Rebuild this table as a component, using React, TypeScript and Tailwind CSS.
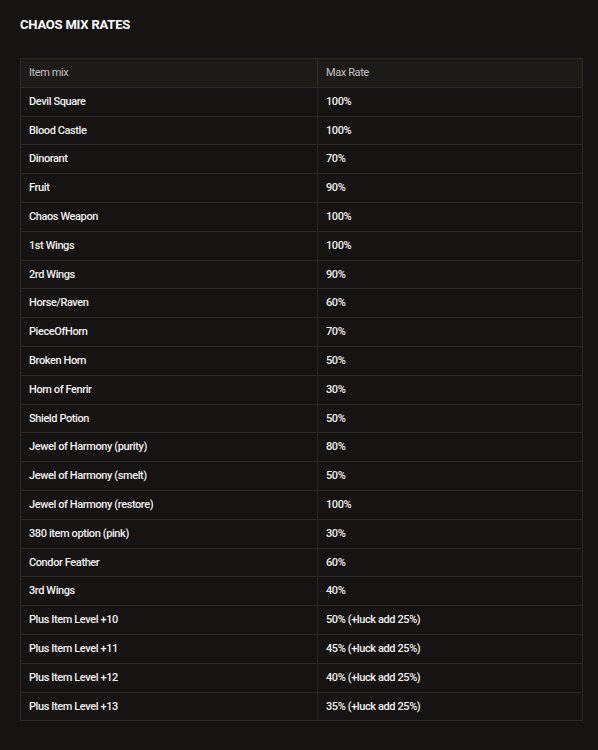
const rates = [
  { item: "Devil Square", rate: "100%" },
  { item: "Blood Castle", rate: "100%" },
  { item: "Dinorant", rate: "70%" },
  { item: "Fruit", rate: "90%" },
  { item: "Chaos Weapon", rate: "100%" },
  { item: "1st Wings", rate: "100%" },
  { item: "2rd Wings", rate: "90%" },
  { item: "Horse/Raven", rate: "60%" },
  { item: "PieceOfHorn", rate: "70%" },
  { item: "Broken Horn", rate: "50%" },
  { item: "Horn of Fenrir", rate: "30%" },
  { item: "Shield Potion", rate: "50%" },
  { item: "Jewel of Harmony (purity)", rate: "80%" },
  { item: "Jewel of Harmony (smelt)", rate: "50%" },
  { item: "Jewel of Harmony (restore)", rate: "100%" },
  { item: "380 item option (pink)", rate: "30%" },
  { item: "Condor Feather", rate: "60%" },
  { item: "3rd Wings", rate: "40%" },
  { item: "Plus Item Level +10", rate: "50% (+luck add 25%)" },
  { item: "Plus Item Level +11", rate: "45% (+luck add 25%)" },
  { item: "Plus Item Level +12", rate: "40% (+luck add 25%)" },
  { item: "Plus Item Level +13", rate: "35% (+luck add 25%)" },
]

export default function App() {
  return (
    <div className="min-h-[750px] w-full bg-[#161412] px-5 pt-[17px] font-['Roboto','Liberation_Sans',sans-serif]">
      {/* Title */}
      <h2 className="text-[13px] font-bold leading-[16px] tracking-[-0.2px] text-white">CHAOS MIX RATES</h2>

      {/* Rates table */}
      <table className="mt-[25px] w-[563px] table-fixed border-collapse text-[11px] tracking-[-0.4px]">
        <colgroup>
          <col className="w-[297px]" />
          <col />
        </colgroup>
        <thead>
          <tr className="bg-[#1d1b18]">
            <th className="border border-[#2c2a27] px-2 py-[6px] text-left font-normal leading-[15.8px] text-[#c4c4c4]">
              Item mix
            </th>
            <th className="border border-[#2c2a27] px-2 py-[6px] text-left font-normal leading-[15.8px] text-[#c4c4c4]">
              Max Rate
            </th>
          </tr>
        </thead>
        <tbody>
          {rates.map((row) => (
            <tr key={row.item}>
              <td className="border border-[#2c2a27] px-2 py-[6px] font-medium leading-[15.8px] text-[#f0f0f0]">
                {row.item}
              </td>
              <td className="border border-[#2c2a27] px-2 py-[6px] font-medium leading-[15.8px] text-[#f0f0f0]">
                {row.rate}
              </td>
            </tr>
          ))}
        </tbody>
      </table>
    </div>
  )
}
